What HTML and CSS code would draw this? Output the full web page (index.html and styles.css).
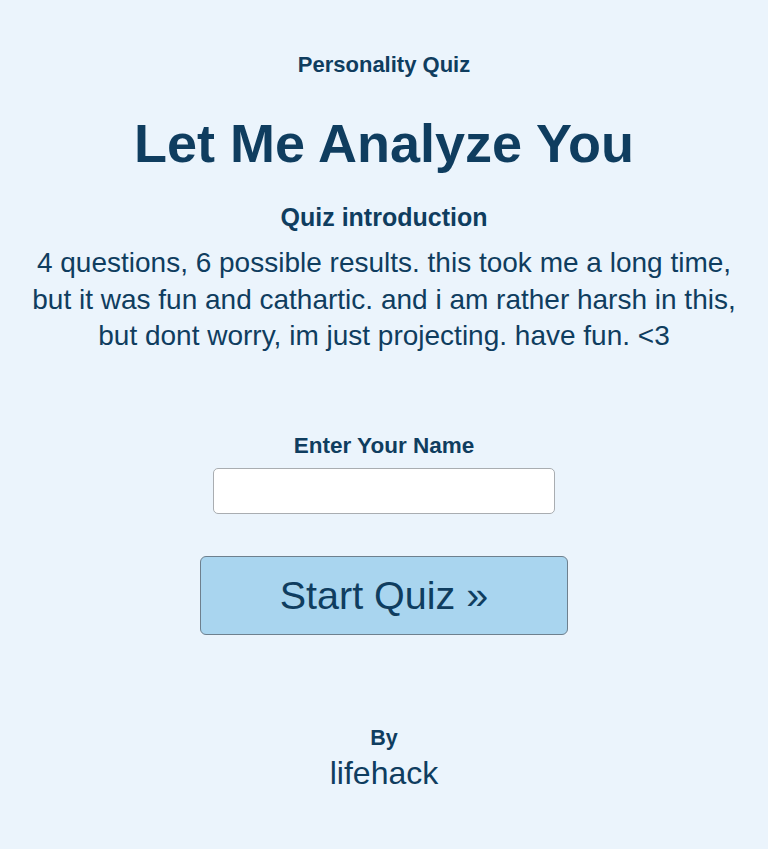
FILE: index.html
```html
<!DOCTYPE html>
<html lang="en">
<head>
  <meta charset="UTF-8" />
  <meta name="viewport" content="width=device-width, initial-scale=1.0"/>
  <title>Let Me Analyze You - Personality Quiz</title>
  <link rel="stylesheet" href="styles.css">
</head>
<body>
  <div class="container">
    <div class="tipo">Personality Quiz</div>
    <h1>Let Me Analyze You</h1>

    <div class="intro">
      <h2>Quiz introduction</h2>
      <p>4 questions, 6 possible results. this took me a long time, but it was fun and cathartic. and i am rather harsh in this, but dont worry, im just projecting. have fun. &lt;3</p>
    </div>

    <div class="nome">
      <label for="nome">Enter Your Name</label>
      <input type="text" id="nome" />
    </div>

    <button>Start Quiz &raquo;</button>

    <div class="autor">
      <div class="by">By</div>
      <div class="nomeAutor">lifehack</div>
    </div>
  </div>
</body>
</html>
```

FILE: styles.css
```css
* {
  box-sizing: border-box;
  font-family: 'Liberation Sans', Arial, sans-serif;
  margin: 0;
  padding: 0;
}

body {
  background-color: #ebf4fc;
  color: #0f3d5f;
}

.container {
  display: flex;
  flex-direction: column;
  align-items: center;
  text-align: center;
  padding: 52px 10px 0;
}

.tipo {
  font-weight: bold;
  font-size: 22px;
  line-height: 25px;
}

h1 {
  font-size: 54px;
  line-height: 62px;
  margin-top: 35px;
}

.intro {
  margin-top: 27px;
}

h2 {
  font-size: 25px;
  line-height: 32px;
}

.intro p {
  font-size: 28px;
  line-height: 36.5px;
  margin: 12px auto 0;
  max-width: 720px;
}

.nome {
  margin-top: 78px;
  display: flex;
  flex-direction: column;
  align-items: center;
  gap: 9px;
}

label {
  font-weight: bold;
  font-size: 22.5px;
  line-height: 26px;
}

input {
  width: 342px;
  height: 46px;
  border: 1px solid #a9adb1;
  border-radius: 5px;
  background: white;
  font-size: 18px;
  padding: 0 10px;
}

button {
  margin-top: 42px;
  width: 368px;
  height: 79px;
  border: 1px solid #6e808e;
  border-radius: 6px;
  background-color: #a9d5ef;
  color: #0f3d5f;
  font-size: 39.5px;
  cursor: pointer;
}

.autor {
  margin-top: 91px;
}

.by {
  font-weight: bold;
  font-size: 21.5px;
  line-height: 25px;
}

.nomeAutor {
  font-size: 32px;
  line-height: 37px;
  margin-top: 4px;
}
```
